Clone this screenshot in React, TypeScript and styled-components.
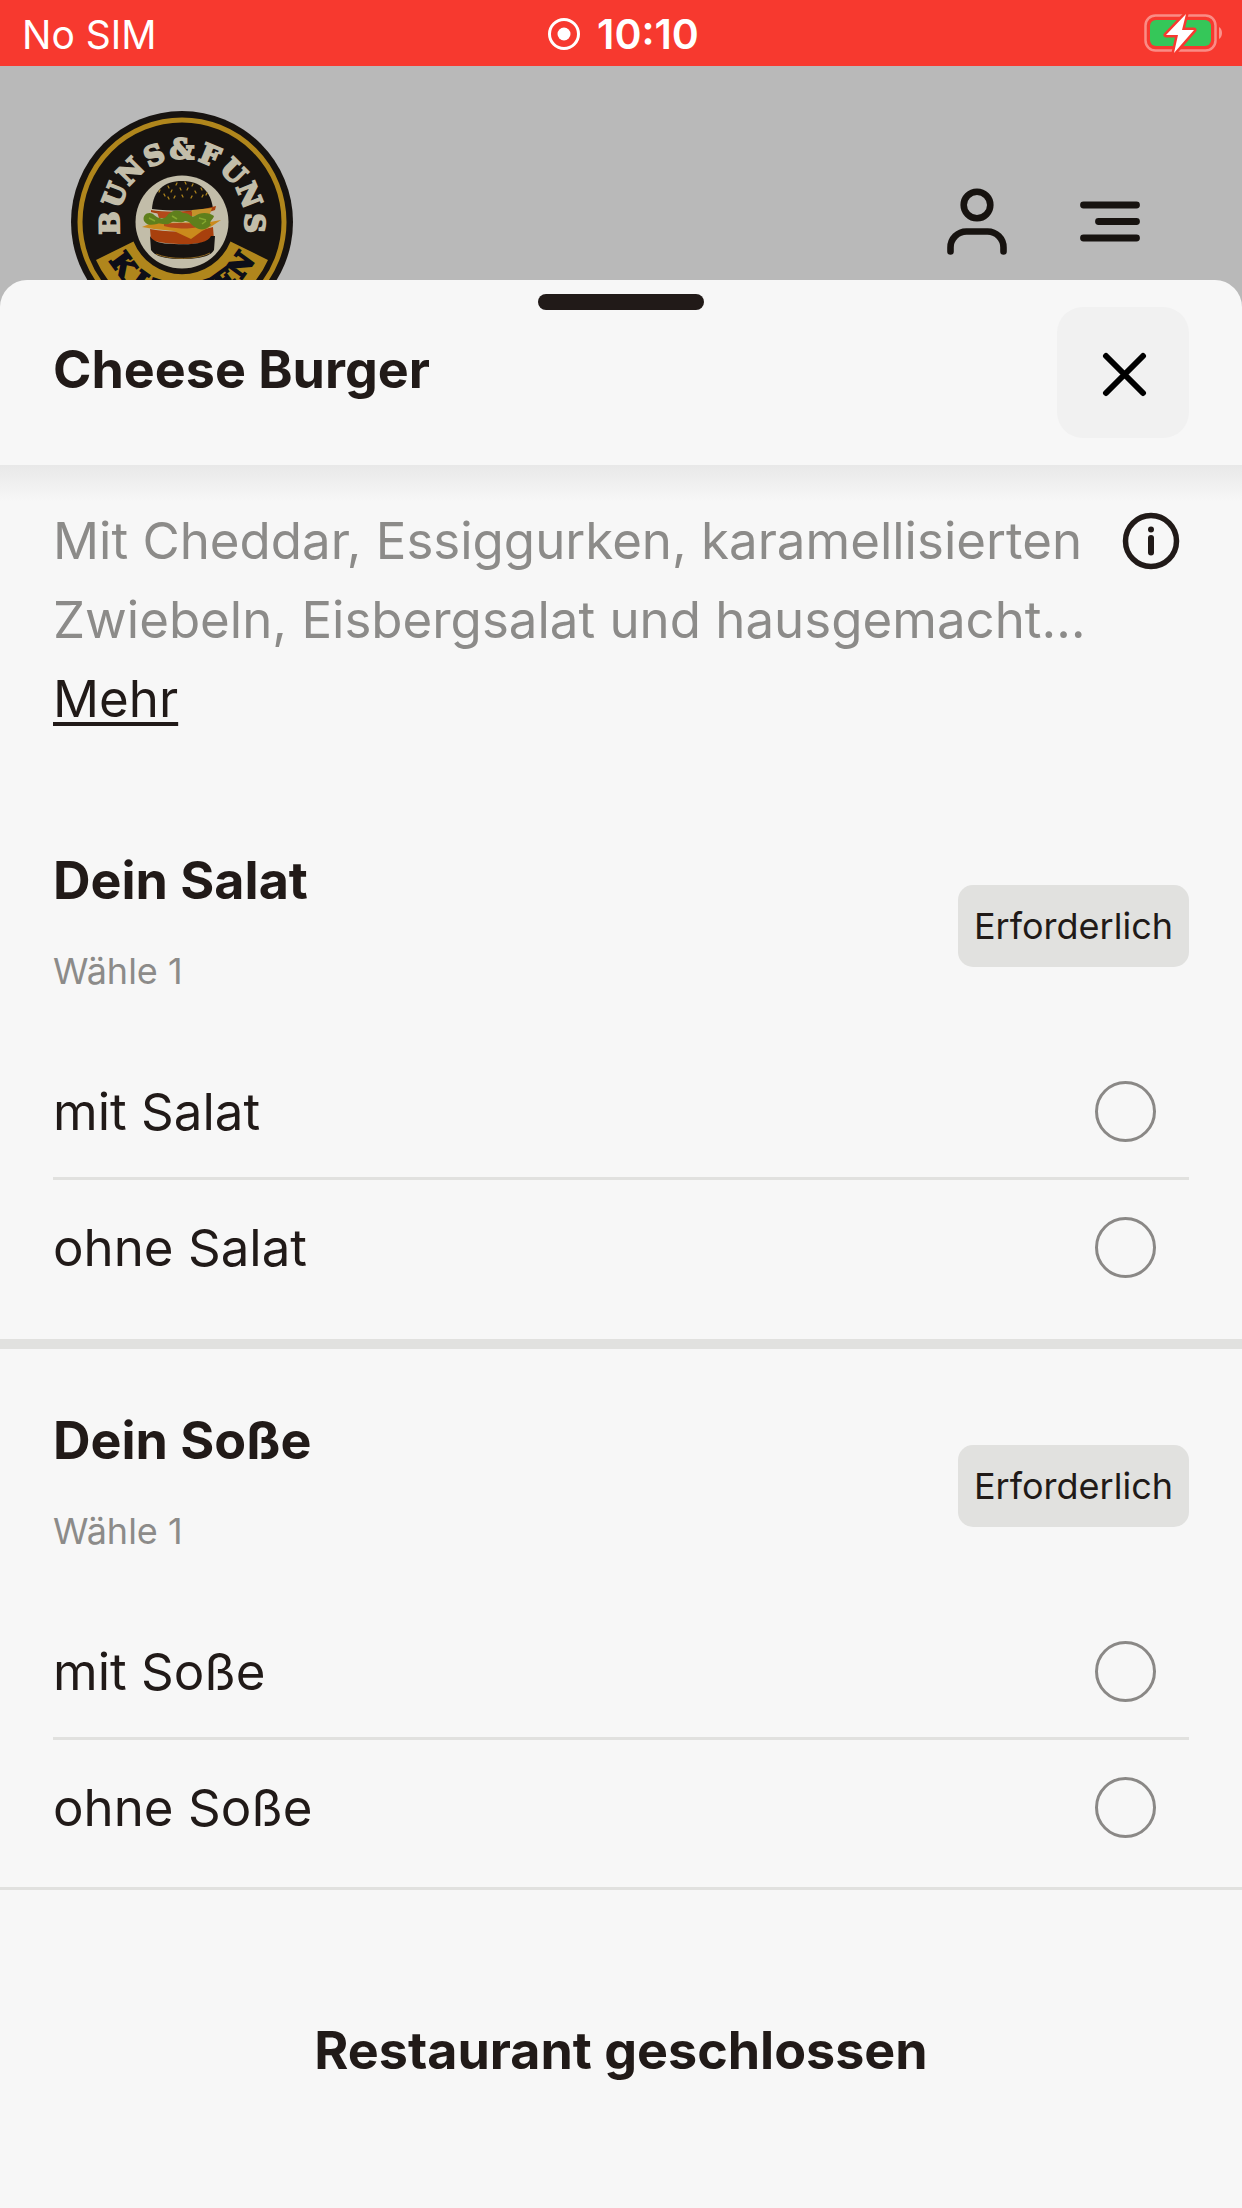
import { useState } from "react";
import styled, { createGlobalStyle } from "styled-components";

const ink = "#211a18";
const muted = "#8c8b89";
const line = "#e1e1df";
const surface = "#f7f7f7";

const GlobalStyle = createGlobalStyle`
  * { box-sizing: border-box; }
  body {
    margin: 0;
    background: #b9b9b9;
    color: ${ink};
    font-family: Inter, "Liberation Sans", sans-serif;
    font-size: 51px;
  }
  button {
    border: 0;
    padding: 0;
    background: none;
    color: inherit;
    font: inherit;
    cursor: pointer;
  }
  h1, h2, p { margin: 0; }
  svg { display: block; }
`;

const Page = styled.div`
  display: flex;
  flex-direction: column;
  height: 100vh;
`;

const StatusBar = styled.div`
  display: grid;
  grid-template-columns: 1fr auto 1fr;
  align-items: center;
  flex: none;
  height: 66px;
  padding: 2px 18px 0 22px;
  background: #f7392f;
  color: #fff;
  font-size: 39px;
`;

const Clock = styled.div`
  display: flex;
  align-items: center;
  gap: 16px;
  font-size: 41px;
  font-weight: 600;
`;

const BatterySlot = styled.div`
  justify-self: end;
`;

const ShopHeader = styled.header`
  display: flex;
  align-items: flex-start;
  justify-content: space-between;
  flex: none;
  height: 214px;
  padding: 44px 99px 0 70px;
  overflow: hidden;
`;

const ShopNav = styled.nav`
  display: flex;
  gap: 67px;
  padding-top: 76px;
`;

const Sheet = styled.main`
  position: relative;
  display: flex;
  flex: 1;
  flex-direction: column;
  min-height: 0;
  border-radius: 27px 27px 0 0;
  background: ${surface};
`;

const Handle = styled.span`
  position: absolute;
  top: 14px;
  left: 50%;
  width: 166px;
  height: 16px;
  border-radius: 8px;
  background: ${ink};
  transform: translateX(-50%);
`;

const SheetHeader = styled.div`
  display: flex;
  align-items: flex-start;
  justify-content: space-between;
  flex: none;
  padding: 27px 53px;
`;

const Title = styled.h1`
  padding: 23px 0;
  font-size: 52px;
  font-weight: 700;
  line-height: 80px;
`;

const CloseButton = styled.button`
  display: grid;
  place-items: center;
  width: 132px;
  height: 131px;
  border-radius: 26px;
  background: #f1f1f1;
`;

const Scroller = styled.div`
  flex: 1;
  min-height: 0;
  overflow-y: auto;
  scrollbar-width: none;
  background: linear-gradient(#e8e8e8, ${surface} 36px);
`;

const Intro = styled.div`
  display: flex;
  align-items: flex-start;
  padding: 36px 53px 51px;
  line-height: 79px;
`;

const Description = styled.div`
  flex: 1;
  color: ${muted};
`;

const MoreButton = styled.button`
  display: block;
  color: ${ink};
  text-decoration: underline;
  text-decoration-thickness: 4px;
  text-underline-offset: 5px;
  text-decoration-skip-ink: none;
`;

const InfoButton = styled.button`
  display: grid;
  place-items: center;
  width: 76px;
  height: 79px;
`;

const Group = styled.section`
  padding: 62px 53px 26px;

  & + & {
    border-top: 10px solid ${line};
  }
`;

const GroupHeader = styled.div`
  display: flex;
  align-items: center;
  justify-content: space-between;
  margin-bottom: 43px;
`;

const GroupTexts = styled.div`
  display: grid;
  gap: 30px;
  line-height: 60px;
`;

const GroupTitle = styled.h2`
  font-size: 52px;
  font-weight: 700;
`;

const GroupHint = styled.p`
  color: ${muted};
  font-size: 36px;
`;

const Badge = styled.span`
  padding: 0 16px;
  border-radius: 15px;
  background: ${line};
  font-size: 36px;
  line-height: 82px;
`;

const Option = styled.label`
  display: flex;
  align-items: center;
  justify-content: space-between;
  height: 133px;
  padding: 2px 33px 0 0;
  cursor: pointer;

  & + & {
    height: 136px;
    border-top: 3px solid ${line};
  }
`;

const Radio = styled.input`
  width: 61px;
  height: 61px;
  margin: 0;
  border: 3px solid #8a8886;
  border-radius: 50%;
  appearance: none;

  &:checked {
    border: 18px solid ${ink};
  }
`;

const Footer = styled.footer`
  flex: none;
  border-top: 3px solid ${line};
`;

const OrderButton = styled.button`
  width: 100%;
  height: 318px;
  padding-top: 2px;
  font-size: 52px;
  font-weight: 700;
`;

const LogoLetter = styled.text`
  font-family: "DejaVu Serif", serif;
  font-size: 27px;
  font-weight: 700;
  text-anchor: middle;
  stroke-width: 2px;
`;

const topLetters = [..."BUNS&FUNS"];
const ribbonLetters = [..."KITCHEN"];
const seeds = [
  [-22, -32], [-14, -36], [-5, -39], [3, -40], [11, -38], [19, -34], [25, -29],
  [-18, -28], [-10, -32], [-2, -34], [6, -34], [13, -31], [21, -27],
  [-14, -25], [-7, -26], [0, -27], [10, -26],
];

function Logo() {
  return (
    <svg width="224" height="224" viewBox="-112 -112 224 224" role="img" aria-label="Buns & Funs Kitchen">
      <circle r="111" fill="#171310" />
      <circle r="102" fill="none" stroke="#b0861c" strokeWidth="5" />
      {topLetters.map((letter, i) => (
        <LogoLetter key={i} y="-63" fill="#c2bda9" stroke="#c2bda9" transform={`rotate(${(i - 4) * 22.7})`}>
          {letter}
        </LogoLetter>
      ))}
      <path d="M-48.500 19.500A52.300 52.300 0 0 0 48.500 19.500L86 38A94 94 0 0 1-86 38Z" fill="#b0861c" />
      {ribbonLetters.map((letter, i) => (
        <LogoLetter key={i} y="82" fill="#0d0e18" stroke="#0d0e18" transform={`rotate(${(3 - i) * 18})`}>
          {letter}
        </LogoLetter>
      ))}
      <circle r="46.500" fill="#c2bda9" />
      <path d="M-30-13C-29-31-18-41 0-41S29-31 31-13C12-11-12-11-30-13Z" fill="#171310" />
      {seeds.map(([x, y], i) => (
        <path key={i} d={`M${x} ${y}l${i % 2 ? 1 : -1} 2`} stroke="#b0861c" strokeWidth="1.200" strokeLinecap="round" />
      ))}
      <path d="M-31-12C-14-9 14-10 34-16L33-12C22-7-14-5-31-10Z" fill="#a8400d" />
      <path d="M10-12L30-14L27-5L8-6Z" fill="#c4932b" />
      <path d="M-25-10H10V-4H-23Z" fill="#b4491a" />
      <path d="M-32 7C-14 11 14 10 31 5L32 18C14 24-15 23-31 18Z" fill="#a8400d" />
      <path d="M-40 5L-30 1L28 0L39-2L30 4L20 9L9 17L-8 9L-28 7Z" fill="#cb8a1c" />
      <path d="M-18 2C-4 0 12 1 19 3C14 8-8 7-18 4Z" fill="#b4491a" />
      <path d="M-38-1C-40-7-34-11-29-8C-25-4-20-2-16-5C-12-11-4-14 1-9C7-10 9-4 13-6C18-10 27-10 32-6C31-2 26 0 29 3C23 9 17 8 13 5C9 3 8-1 3-1C-1 2-6-1-10 0C-16 5-20 0-25 2C-30 3-35 4-38-1Z" fill="#5f7f1c" />
      <path d="M-33-4l6 3M-10-6l5 3M17-4l7 2M20 2l4-3" fill="none" stroke="#86a72e" strokeWidth="1.500" />
      <path d="M-32 14C-30 19-22 22-8 22C12 23 26 21 29 14L33 14L32 28C29 34 18 37 0 37C-18 37-27 34-31 28Z" fill="#171310" />
      <path d="M-26 32C-12 38 15 38 28 31" fill="none" stroke="#8a6420" strokeWidth="1" />
    </svg>
  );
}

function BatteryIcon() {
  return (
    <svg width="80" height="42" viewBox="0 1 80 42" role="img" aria-label="Akku lädt">
      <rect x="1.500" y="3.500" width="70" height="35" rx="10" fill="none" stroke="#fff" strokeOpacity=".42" strokeWidth="2.500" />
      <path d="M75 15c4 2 4 10 0 12z" fill="#fff" fillOpacity=".45" />
      <rect x="6" y="8" width="61" height="26" rx="6" fill="#35c759" />
      <path d="M42 2L22 23H34L30 41L50 18H38Z" fill="#fff" stroke="#f7392f" strokeWidth="5" strokeLinejoin="round" paintOrder="stroke" />
    </svg>
  );
}

type GroupData = { id: string; title: string; options: string[] };

const groups: GroupData[] = [
  { id: "salat", title: "Dein Salat", options: ["mit Salat", "ohne Salat"] },
  { id: "sosse", title: "Dein Soße", options: ["mit Soße", "ohne Soße"] },
];

function OptionGroup({ id, title, options }: GroupData) {
  const [picked, setPicked] = useState("");
  return (
    <Group role="radiogroup" aria-labelledby={`${id}-title`}>
      <GroupHeader>
        <GroupTexts>
          <GroupTitle id={`${id}-title`}>{title}</GroupTitle>
          <GroupHint>Wähle 1</GroupHint>
        </GroupTexts>
        <Badge>Erforderlich</Badge>
      </GroupHeader>
      {options.map((option) => (
        <Option key={option}>
          {option}
          <Radio type="radio" name={id} value={option} checked={picked === option} onChange={() => setPicked(option)} />
        </Option>
      ))}
    </Group>
  );
}

export default function App() {
  return (
    <Page>
      <GlobalStyle />
      <StatusBar>
        <span>No SIM</span>
        <Clock>
          <svg width="34" height="34" viewBox="0 0 34 34" aria-hidden="true">
            <circle cx="17" cy="17" r="14.500" fill="none" stroke="#fff" strokeWidth="3" />
            <circle cx="17" cy="17" r="6.500" fill="#fff" />
          </svg>
          10:10
        </Clock>
        <BatterySlot>
          <BatteryIcon />
        </BatterySlot>
      </StatusBar>
      <ShopHeader>
        <Logo />
        <ShopNav>
          <button aria-label="Konto">
            <svg width="66" height="72" viewBox="0 0 66 72" fill="none" stroke="#171310" strokeWidth="6.600" strokeLinecap="round">
              <circle cx="33" cy="19" r="13.300" />
              <path d="M6.500 65.500V61.500A16 16 0 0 1 22.500 45.500H43.500A16 16 0 0 1 59.500 61.500V65.500" />
            </svg>
          </button>
          <button aria-label="Menü">
            <svg width="66" height="72" viewBox="0 0 66 72" fill="none" stroke="#171310" strokeWidth="6.800" strokeLinecap="round">
              <path d="M6.500 19H59.500M21.500 35.500H59.500M6.500 52H59.500" />
            </svg>
          </button>
        </ShopNav>
      </ShopHeader>
      <Sheet>
        <Handle />
        <SheetHeader>
          <Title>Cheese Burger</Title>
          <CloseButton aria-label="Schließen">
            <svg width="48" height="48" viewBox="0 0 48 48" fill="none" stroke="#000" strokeWidth="6" strokeLinecap="round">
              <path d="M7 7L44 44M44 7L7 44" />
            </svg>
          </CloseButton>
        </SheetHeader>
        <Scroller>
          <Intro>
            <Description>
              <p>Mit Cheddar, Essiggurken, karamellisierten Zwiebeln, Eisbergsalat und hausgemacht…</p>
              <MoreButton>Mehr</MoreButton>
            </Description>
            <InfoButton aria-label="Informationen">
              <svg width="58" height="58" viewBox="0 0 58 58" fill="none" stroke={ink} strokeLinecap="round">
                <circle cx="29" cy="29" r="25.500" strokeWidth="5.500" />
                <path d="M29 26V40.500" strokeWidth="6" />
                <circle cx="29" cy="17.500" r="3" fill={ink} stroke="none" />
              </svg>
            </InfoButton>
          </Intro>
          {groups.map((group) => (
            <OptionGroup key={group.id} {...group} />
          ))}
        </Scroller>
        <Footer>
          <OrderButton>Restaurant geschlossen</OrderButton>
        </Footer>
      </Sheet>
    </Page>
  );
}
